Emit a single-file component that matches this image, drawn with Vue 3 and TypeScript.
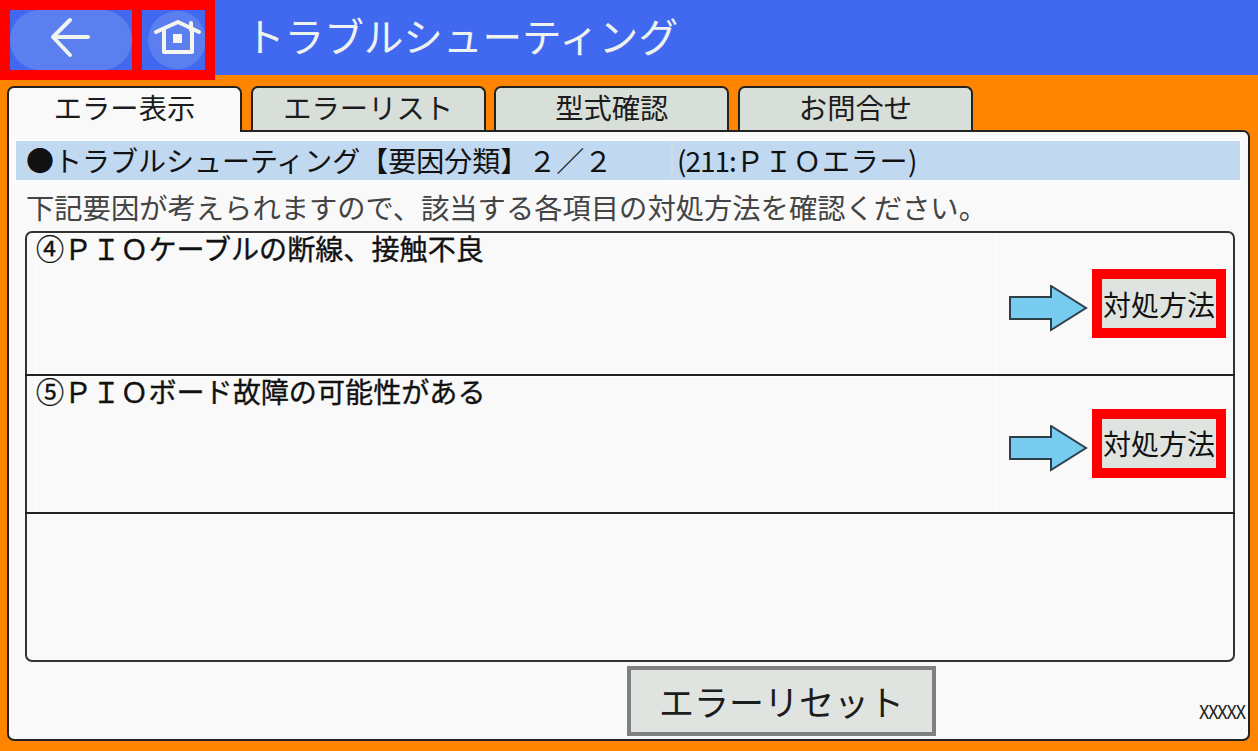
<template>
  <div class="screen">
    <header class="header">
      <div class="nav-group">
        <button class="nav-btn back">
          <svg width="122" height="60" viewBox="0 0 122 60">
            <rect x="0" y="0" width="122" height="60" rx="30" fill="#5c7ff0" />
            <path d="M78 27H44M60 10 43 27l17 18" fill="none" stroke="#f0f4ee" stroke-width="4" stroke-linecap="round" stroke-linejoin="round" />
          </svg>
        </button>
        <button class="nav-btn home">
          <svg width="63" height="60" viewBox="0 0 63 60">
            <circle cx="35" cy="30" r="29" fill="#5c7ff0" />
            <path d="M14 22 36 12l21 10M22 21v21h28V21M49 13v7" fill="none" stroke="#f4f6ee" stroke-width="4" stroke-linecap="round" stroke-linejoin="round" />
            <rect x="31" y="24" width="9" height="9" fill="#f4f6ee" />
          </svg>
        </button>
      </div>
      <h1 class="title">トラブルシューティング</h1>
    </header>

    <nav class="tabs">
      <div
        v-for="(tab, i) in tabs"
        :key="tab"
        class="tab"
        :class="{ active: i === 0 }"
      >{{ tab }}</div>
    </nav>

    <main class="panel">
      <div class="caption">
        <div class="caption-main">●トラブルシューティング【要因分類】２／２</div>
        <div class="caption-code"><span class="num">(211:</span>ＰＩＯエラー)</div>
      </div>
      <p class="desc">下記要因が考えられますので、該当する各項目の対処方法を確認ください。</p>

      <section class="list">
        <div v-for="row in rows" :key="row.text" class="row" :class="row.cls">
          <div class="row-text">{{ row.text }}</div>
          <div class="row-action">
            <svg class="arrow" width="79" height="47" viewBox="0 0 79 47">
              <path d="M1 12H42V1L77 23 42 45V34H1Z" fill="#78ccf0" stroke="#2f3f4a" stroke-width="2" />
            </svg>
            <button class="method">対処方法</button>
          </div>
        </div>
      </section>

      <footer class="footer">
        <button class="reset">エラーリセット</button>
        <span class="ver">XXXXX</span>
      </footer>
    </main>
  </div>
</template>

<script setup lang="ts">
const tabs: string[] = ['エラー表示', 'エラーリスト', '型式確認', 'お問合せ']

const rows = [
  { text: '④ＰＩＯケーブルの断線、接触不良', cls: 'first' },
  { text: '⑤ＰＩＯボード故障の可能性がある', cls: 'second' },
]
</script>

<style>
body {
  margin: 0;
}
</style>

<style scoped>
.screen {
  width: 1258px;
  height: 751px;
  background: #ff8400;
  font-family: "Noto Sans CJK JP", "Liberation Sans", sans-serif;
  color: #1c1c1c;
  overflow: hidden;
  display: flex;
  flex-direction: column;
}
button {
  font-family: inherit;
  color: inherit;
  padding: 0;
  margin: 0;
}

.header {
  height: 75px;
  flex: none;
  background: #4169f0;
  display: flex;
  align-items: flex-start;
}
.nav-group {
  width: 215px;
  height: 80px;
  box-sizing: border-box;
  border: 10px solid #ff0000;
  background: #ff0000;
  display: flex;
  gap: 10px;
  flex: none;
  position: relative;
  z-index: 2;
}
.nav-btn {
  border: none;
  background: #4169f0;
  height: 60px;
  display: block;
}
.nav-btn svg {
  display: block;
}
.back {
  width: 122px;
}
.home {
  width: 63px;
}
.title {
  margin: -3px 0 0 30px;
  font-size: 39.6px;
  line-height: 75px;
  font-weight: 400;
  color: #eef2ee;
  white-space: nowrap;
}

.tabs {
  display: flex;
  gap: 8.67px;
  padding: 11px 0 0 7px;
  flex: none;
}
.tab {
  width: 235px;
  height: 45px;
  box-sizing: border-box;
  border: 2px solid #222;
  border-bottom: none;
  border-radius: 7px 7px 0 0;
  background: #d8dfd9;
  font-size: 28.3px;
  line-height: 38px;
  text-align: center;
}
.tab.active {
  background: #f9f9f9;
  height: 46px;
  margin-bottom: -1px;
  position: relative;
  z-index: 1;
}

.panel {
  width: 1243px;
  height: 611px;
  margin: -1px 0 0 7px;
  box-sizing: border-box;
  border: 2px solid #222;
  border-radius: 0 7px 7px 7px;
  background: #f9f9f9;
  padding: 9px 8px 0 7px;
  display: flex;
  flex-direction: column;
  flex: none;
}
.caption {
  display: flex;
  height: 39px;
  gap: 2px;
  background: #c0d8f0;
  font-size: 28px;
  line-height: 38px;
  color: #111;
  white-space: nowrap;
  box-shadow: 0 1px 0 3px #ffffff80;
}
.caption-main {
  width: 653px;
  padding-left: 10px;
  box-sizing: border-box;
}
.caption-code {
  padding-left: 4px;
  border-left: 2px solid #d0dcea;
  letter-spacing: 0.7px;
}
.num {
  letter-spacing: -1px;
}
.desc {
  margin: 9px 0 6px 10px;
  font-size: 28.3px;
  line-height: 36px;
  color: #444;
  white-space: nowrap;
}
.list {
  height: 431px;
  box-sizing: border-box;
  margin-left: 9px;
  width: 1210px;
  border: 2px solid #333;
  border-radius: 7px;
  flex: none;
}
.row {
  display: flex;
  box-sizing: border-box;
  border-bottom: 2px solid #222;
  margin: 0 -2px;
}
.row.first {
  height: 143px;
}
.row.second {
  height: 138px;
}
.row.second .row-action {
  padding-bottom: 2px;
}
.row-text {
  width: 961px;
  margin-left: 10px;
  box-sizing: border-box;
  border: 1px solid #fff;
  border-bottom: 0;
  font-size: 28.1px;
  -webkit-text-stroke: 0.35px #111;
  line-height: 28px;
  color: #111;
  white-space: nowrap;
}
.row-action {
  flex: 1;
  display: flex;
  align-items: center;
  padding: 0 0 0 13px;
  gap: 4px;
}
.arrow {
  flex: none;
  margin-top: 10px;
}
.method {
  width: 134px;
  height: 69px;
  box-sizing: border-box;
  border: 10px solid #ff0000;
  background: #e0e4e0;
  font-size: 28px;
  line-height: 46px;
  color: #111;
  white-space: nowrap;
  flex: none;
}
.footer {
  flex: 1;
  display: flex;
  padding: 4px 0 0 611px;
}
.reset {
  width: 309px;
  height: 70px;
  box-sizing: border-box;
  border: 4px solid #808080;
  background: #e0e4e0;
  font-size: 35px;
  line-height: 58px;
  color: #1c1c1c;
  white-space: nowrap;
}
.ver {
  margin: 35px -5px 0 auto;
  font-size: 18px;
  line-height: 20px;
  color: #222;
  letter-spacing: -1.1px;
}
</style>
